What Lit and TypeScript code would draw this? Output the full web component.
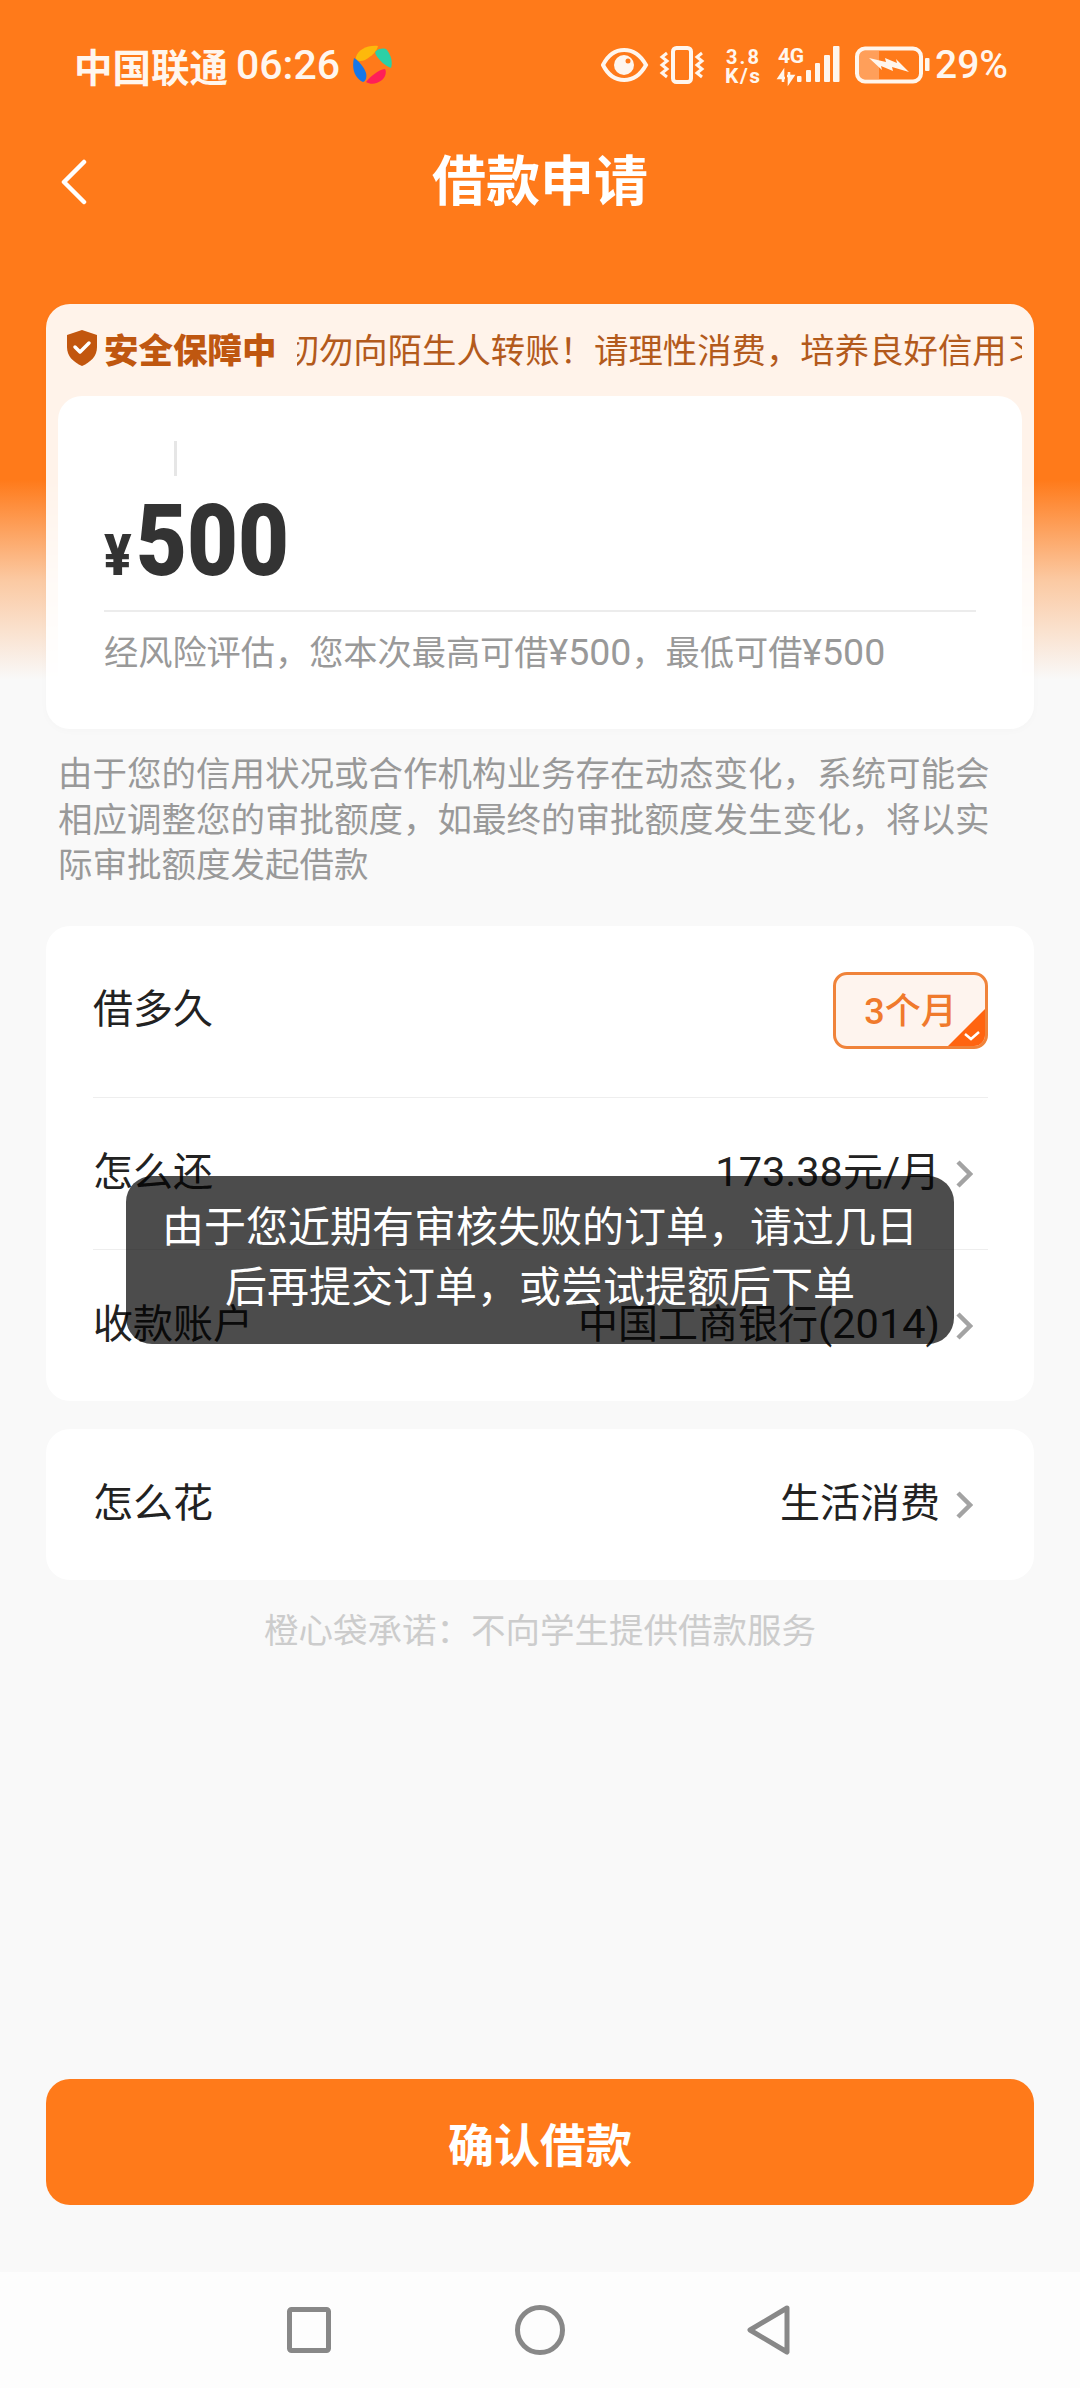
import {LitElement, html, css, svg} from 'lit';
import {customElement, state} from 'lit/decorators.js';

const chevron = html`<svg class="chev" width="18" height="30" viewBox="0 0 18 30"><path d="M3 3l12 12L3 27" fill="none" stroke="#a3a3a3" stroke-width="4.5"/></svg>`;

@customElement('app-root')
export class AppRoot extends LitElement {

  @state()
  bars = [[800, 76, 4.5], [809, 70, 5], [818, 63, 5], [827, 55, 6], [836, 46, 6.5]];

  static override styles = css`
    :host {
      display: block;
      font-family: Roboto, "Noto Sans CJK SC", sans-serif;
      color: #222;
    }
    .page {
      position: relative;
      height: 2388px;
      display: flex;
      flex-direction: column;
      background: linear-gradient(#ff7a1a 0, #ff7a1a 480px, #fbc9a2 580px, #f9f9f9 680px);
    }

    /* status bar */
    .status {
      height: 130px;
      flex: none;
      box-sizing: border-box;
      display: flex;
      align-items: center;
      padding: 0 75px 0 74px;
      color: #fff6ee;
      font-size: 38.5px;
      font-weight: 700;
    }
    .carrier { margin-right: 8px; }
    .clock { font-size: 41px; font-weight: 500; }
    .logo { margin-left: 12px; }
    .status-right {
      margin-left: auto;
      display: flex;
      align-items: center;
    }
    .pct { margin-left: 2px; width: 70px; font-size: 39px; font-weight: 500; white-space: nowrap; }

    /* title */
    .head {
      height: 100px;
      flex: none;
      display: grid;
      grid-template-columns: 1fr auto 1fr;
      align-items: center;
      color: #fff;
    }
    .back { margin-left: 60px; display: block; }
    .title { font-size: 54px; font-weight: 700; line-height: 100px; padding-top: 3px; }

    /* amount card */
    .quota {
      margin: 74px 46px 0;
      height: 425px;
      flex: none;
      border-radius: 24px;
      background: rgba(255, 255, 255, 0.91);
      box-shadow: 0 2px 8px rgba(0, 0, 0, 0.02);
      display: flex;
      flex-direction: column;
    }
    .notice {
      height: 92px;
      flex: none;
      box-sizing: border-box;
      display: flex;
      align-items: center;
      padding: 0 12px 4px 20px;
    }
    .shield { flex: none; }
    .safe {
      margin-left: 6px;
      font-size: 34.5px;
      font-weight: 900;
      color: #bf5710;
      white-space: nowrap;
    }
    .marquee {
      margin-left: 20px;
      flex: 1;
      overflow: hidden;
      white-space: nowrap;
      font-size: 34.4px;
      color: #b35a1c;
    }
    .marquee span { display: block; margin-left: -12px; }
    .inner {
      flex: 1;
      margin: 0 12px;
      padding: 45px 46px 0;
      background: #fff;
      border-radius: 24px;
    }
    .cursor {
      width: 3px;
      height: 35px;
      margin-left: 70px;
      background: #e6e6e6;
    }
    .amount {
      height: 100px;
      margin-top: 15px;
      line-height: 100px;
      font-weight: 900;
      color: #333;
      transform: scaleX(0.88);
      transform-origin: left;
      white-space: nowrap;
    }
    .amount .yen { font-size: 58px; margin-right: 5px; }
    .amount .num { font-size: 100px; }
    .rule { height: 2px; margin-top: 19px; background: #ececec; }
    .hint {
      margin-top: 17px;
      font-size: 34.2px;
      line-height: 46px;
      color: #999;
      white-space: nowrap;
    }
    .hint span { font-size: 37.5px; }

    .desc {
      margin: 23px 58px 0;
      font-size: 34.5px;
      line-height: 45.5px;
      color: #999;
      height: 136px;
      flex: none;
    }

    /* list cards */
    .card {
      margin: 38px 46px 0;
      padding: 0 46px 0 47px;
      background: #fff;
      border-radius: 24px;
      flex: none;
    }
    .card + .card { margin-top: 28px; }
    .card + .card .row { height: 151px; }
    .row {
      display: flex;
      align-items: center;
      font-size: 40px;
      height: 152px;
      border-top: 1px solid #eee;
      box-sizing: border-box;
    }
    .row:first-child { border-top: none; }
    .row.term { height: 171px; padding-bottom: 6px; }
    .row > span { padding-bottom: 10px; }
    .row.term > span { padding-bottom: 6px; }
    .row .value { margin-left: auto; }
    .value i { font-style: normal; font-size: 41.5px; }
    .chev { margin-left: 15px; margin-right: 15px; flex: none; }
    .badge {
      position: relative;
      margin-left: auto;
      width: 155px;
      height: 77px;
      box-sizing: border-box;
      margin-top: 3px;
      padding-bottom: 4px;
      border: 3px solid #f0833a;
      border-radius: 14px;
      background: #fef4ee;
      color: #f07a2c;
      font-size: 36px;
      font-weight: 500;
      display: flex;
      align-items: center;
      justify-content: center;
      overflow: hidden;
    }
    .corner { position: absolute; right: 0; bottom: 0; display: block; }

    .promise {
      margin-top: 26px;
      text-align: center;
      font-size: 34.5px;
      line-height: 50px;
      color: #ccc;
      flex: none;
    }
    .spacer { flex: 1; }
    .confirm {
      margin: 0 46px 67px;
      height: 126px;
      border-radius: 24px;
      background: #ff7a1a;
      color: #fff;
      font-size: 46px;
      font-weight: 700;
      display: flex;
      align-items: center;
      justify-content: center;
      flex: none;
    }

    /* system nav */
    .nav {
      height: 116px;
      flex: none;
      background: #fdfdfd;
      display: flex;
      align-items: center;
      padding: 0 0 0 287px;
      box-sizing: border-box;
    }
    .nav svg { display: block; }
    .nav svg + svg { margin-left: 184px; }
    .nav svg + svg + svg { margin-left: 182px; }

    .toast {
      position: absolute;
      left: 126px;
      top: 1176px;
      width: 828px;
      height: 168px;
      box-sizing: border-box;
      padding-top: 22px;
      border-radius: 26px;
      background: rgba(0, 0, 0, 0.7);
      color: #fff;
      font-size: 42px;
      line-height: 60px;
      text-align: center;
    }
  `;

  override render() {
    return html`
      <div class="page">
        <div class="status">
          <span class="carrier">中国联通</span>
          <span class="clock">06:26</span>
          ${this._logo()}
          <div class="status-right">${this._sysIcons()}<span class="pct">29%</span></div>
        </div>

        <div class="head">
          <svg class="back" width="28" height="46" viewBox="0 0 28 46"><path d="M24 3L4 23l20 20" fill="none" stroke="#fff" stroke-width="4.5" stroke-linecap="round" stroke-linejoin="round"/></svg>
          <div class="title">借款申请</div>
          <div></div>
        </div>

        <div class="quota">
          <div class="notice">
            <svg class="shield" width="32" height="36" viewBox="0 0 32 36"><path d="M16 0l15 5v12c0 9-6 15-15 19C7 32 1 26 1 17V5z" fill="#c2560e"/><path d="M9 17l5 5 9-9" fill="none" stroke="#fff" stroke-width="3.5" stroke-linecap="round" stroke-linejoin="round"/></svg>
            <span class="safe">安全保障中</span>
            <div class="marquee"><span>切勿向陌生人转账！请理性消费，培养良好信用习惯</span></div>
          </div>
          <div class="inner">
            <div class="cursor"></div>
            <div class="amount"><span class="yen">¥</span><span class="num">500</span></div>
            <div class="rule"></div>
            <div class="hint">经风险评估，您本次最高可借<span>¥500</span>，最低可借<span>¥500</span></div>
          </div>
        </div>

        <div class="desc">由于您的信用状况或合作机构业务存在动态变化，系统可能会相应调整您的审批额度，如最终的审批额度发生变化，将以实际审批额度发起借款</div>

        <div class="card">
          <div class="row term">
            <span>借多久</span>
            <div class="badge">3个月
              <svg class="corner" width="37" height="37" viewBox="0 0 37 37"><path d="M37 0v37H0z" fill="#ff6410"/><path d="M17 25l6 5 8-7" fill="none" stroke="#fff" stroke-width="2.5"/></svg>
            </div>
          </div>
          <div class="row"><span>怎么还</span><span class="value"><i>173.38</i>元<i>/</i>月</span>${chevron}</div>
          <div class="row"><span>收款账户</span><span class="value">中国工商银行<i>(2014)</i></span>${chevron}</div>
        </div>

        <div class="card">
          <div class="row"><span>怎么花</span><span class="value">生活消费</span>${chevron}</div>
        </div>

        <div class="promise">橙心袋承诺：不向学生提供借款服务</div>
        <div class="spacer"></div>
        <div class="confirm">确认借款</div>

        <div class="nav">
          <svg width="44" height="46" viewBox="0 0 44 46"><rect x="2.5" y="2.5" width="39" height="41" rx="2" fill="none" stroke="#888" stroke-width="5"/></svg>
          <svg width="50" height="50" viewBox="0 0 50 50"><circle cx="25" cy="25" r="22.5" fill="none" stroke="#888" stroke-width="5"/></svg>
          <svg width="44" height="50" viewBox="0 0 44 50"><path d="M40 3L3 25l37 22z" fill="none" stroke="#888" stroke-width="5" stroke-linejoin="round"/></svg>
        </div>

        <div class="toast">由于您近期有审核失败的订单，请过几日<br>后再提交订单，或尝试提额后下单</div>
      </div>
    `;
  }

  // little colour wheel next to the clock
  private _logo() {
    return html`<svg class="logo" width="40" height="40" viewBox="0 0 40 40">
      <path d="M4 12C6 5 15 0 26 1 25 6 20 11 13 15 9 17 3 16 4 12z" fill="#fdb90b"/>
      <path d="M24 6C28 3 33 3 35 5 39 10 41 17 39 23 33 21 27 15 24 10 23 8 23 7 24 6z" fill="#2bd0a6"/>
      <path d="M14 37C19 31 26 25 33 24 35 27 33 33 30 35 25 39 19 40 14 37z" fill="#ff1f58"/>
      <path d="M2 13C7 16 12 22 14 28 15 32 14 36 11 37 4 34-1 25 2 13z" fill="#1677e8"/>
    </svg>`;
  }

  // eye, vibrate, speed, signal and battery, drawn on one strip with page x as units
  private _sysIcons() {
    const waves = (x: number) => svg`<path d="M${x} 53l-5 4 5 4-5 4 5 4-5 4 5 4" fill="none" stroke="#fff6ee" stroke-width="3"/>`;
    return html`<svg width="332" height="50" viewBox="604 40 332 50" style="display:block">
      <path d="M606 65c10-20 32-20 43 0-11 20-33 20-43 0z" fill="none" stroke="#fff6ee" stroke-width="4"/>
      <circle cx="627" cy="65" r="10" fill="#fff6ee"/><circle cx="631" cy="61" r="2.5" fill="#ff7a1a"/>
      ${waves(670)}${waves(705)}
      <rect x="676" y="48" width="18" height="34" rx="3.5" fill="none" stroke="#fff6ee" stroke-width="4"/>
      <text x="729" y="64" font-size="20" font-weight="700" fill="#fff6ee" textLength="33">3.8</text>
      <text x="728" y="83" font-size="21" font-weight="700" fill="#fff6ee" textLength="35">K/s</text>
      <text x="781" y="63" font-size="21" font-weight="700" fill="#fff6ee" textLength="26">4G</text>
      <path d="M786 82V72l-4 6h6M792 72v10l4-6h-6" fill="none" stroke="#fff6ee" stroke-width="2.6"/>
      ${this.bars.map(([x, y, w]) => svg`<rect x="${x}" y="${y}" width="${w}" height="${82 - y}" rx="1" fill="#fff6ee"/>`)}
      <rect x="860" y="48.5" width="64" height="33" rx="8" fill="none" stroke="#fff6ee" stroke-width="4"/>
      <path d="M862 51h20v28h-20z" fill="#fff6ee" fill-opacity="0.3"/>
      <path d="M872 58l17 4-1-4 12 5-1-4 13 13-17-5 1 4-12-5 1 4z" fill="#fff6ee"/>
      <rect x="928" y="58" width="4.5" height="13" rx="1" fill="#fff6ee"/>
    </svg>`;
  }
}

declare global {
  interface HTMLElementTagNameMap {
    'app-root': AppRoot;
  }
}
